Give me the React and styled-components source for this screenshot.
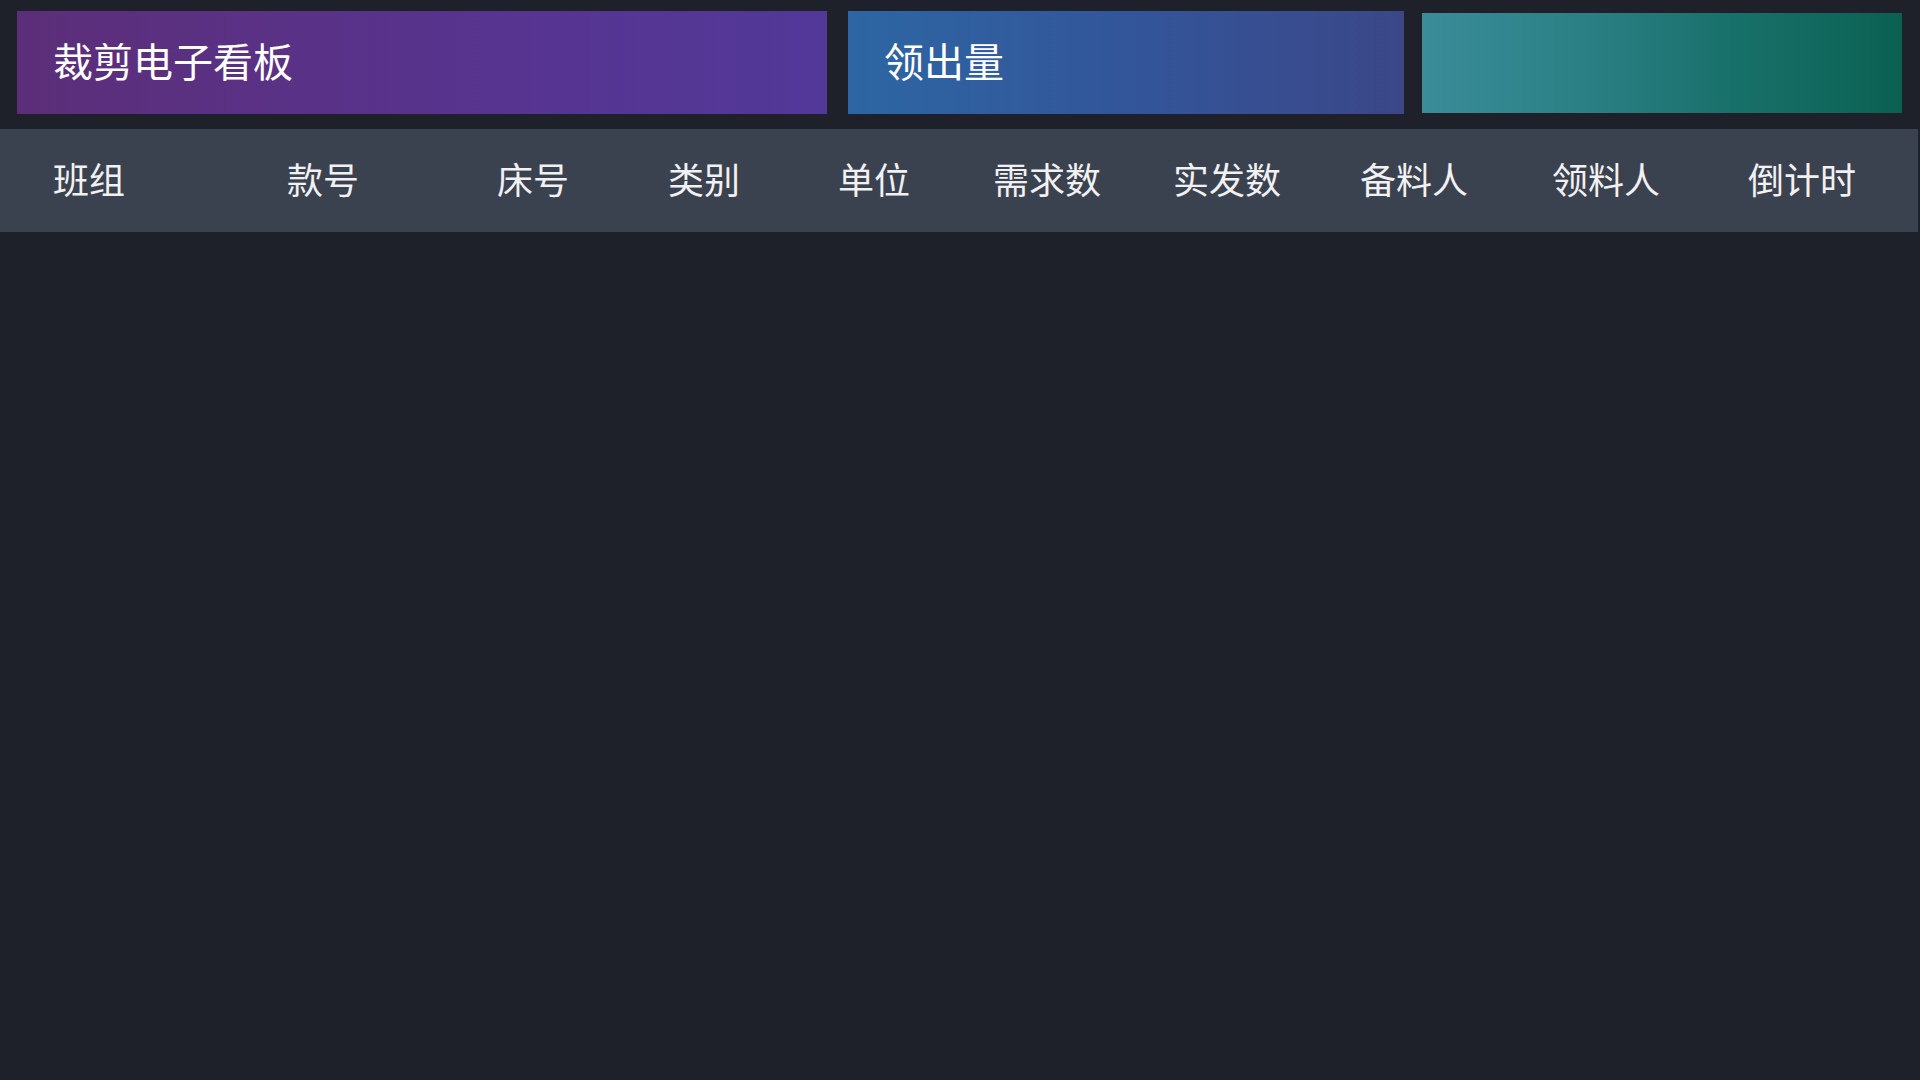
import React from "react";
import styled, { createGlobalStyle } from "styled-components";

const GlobalStyle = createGlobalStyle`
  html, body {
    margin: 0;
    padding: 0;
    background: #1e2129;
  }
  body {
    font-family: "Noto Sans CJK SC", "Noto Sans", sans-serif;
    color: #ffffff;
  }
  #root {
    min-height: 100vh;
    background: #1e2129;
  }
`;

const Page = styled.div`
  width: 1920px;
  height: 1080px;
  background: #1e2129;
  overflow: hidden;
`;

const TopBar = styled.div`
  display: flex;
  align-items: center;
  padding: 11px 0 0 17px;
  height: 103px;
`;

const Card = styled.div`
  width: ${(p) => p.$w}px;
  height: ${(p) => p.$h || 103}px;
  margin-right: ${(p) => p.$mr || 0}px;
  background: ${(p) => p.$bg};
  display: flex;
  align-items: center;
  padding-left: 36px;
  padding-bottom: 5px;
  box-sizing: border-box;
  flex-shrink: 0;
`;

const CardTitle = styled.span`
  font-size: 40px;
  line-height: 1;
  color: #ffffff;
  letter-spacing: 0;
  white-space: nowrap;
`;

const HeaderRow = styled.div`
  margin-top: 15px;
  width: 1918px;
  height: 103px;
  background: #3b424f;
  display: grid;
  grid-template-columns: 234px 210px 171px 170px 155px 180px 187px 192px 196px 1fr;
  align-items: center;
  padding-left: 53px;
  padding-bottom: 5px;
  box-sizing: border-box;
`;

const HeaderCell = styled.div`
  font-size: 36px;
  line-height: 1;
  color: #f1f1f3;
  white-space: nowrap;
`;

const columns = ["班组", "款号", "床号", "类别", "单位", "需求数", "实发数", "备料人", "领料人", "倒计时"];

export default function App() {
  return (
    <Page>
      <GlobalStyle />
      <TopBar>
        <Card
          $w={810}
          $mr={21}
          $bg="linear-gradient(90deg, #5c2e79 0%, #573490 60%, #523899 100%)"
        >
          <CardTitle>裁剪电子看板</CardTitle>
        </Card>
        <Card
          $w={556}
          $mr={18}
          $bg="linear-gradient(90deg, #2d66a3 0%, #33559a 50%, #3b4788 100%)"
        >
          <CardTitle>领出量</CardTitle>
        </Card>
        <Card
          $w={480}
          $h={100}
          $bg="linear-gradient(90deg, #3a8d99 0%, #2a7f84 35%, #18706a 65%, #0a6152 100%)"
        />
      </TopBar>
      <HeaderRow>
        {columns.map((c) => (
          <HeaderCell key={c}>{c}</HeaderCell>
        ))}
      </HeaderRow>
    </Page>
  );
}
